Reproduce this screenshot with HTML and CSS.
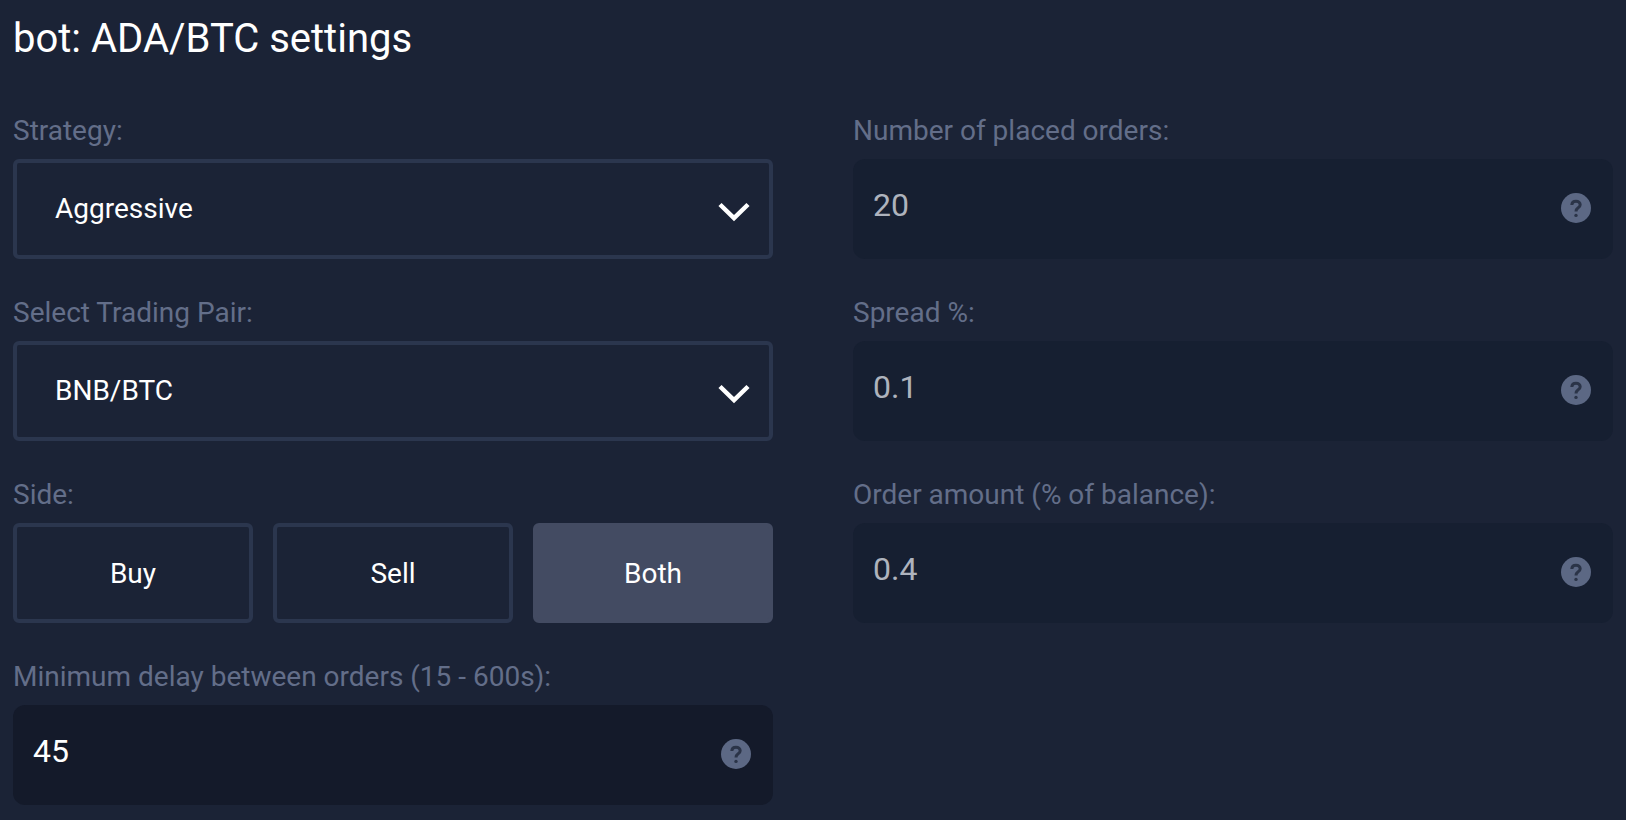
FILE: index.html
```html
<!DOCTYPE html>
<html lang="en">
<head>
<meta charset="utf-8">
<title>bot: ADA/BTC settings</title>
<link rel="stylesheet" href="styles.css">
</head>
<body>
<h1 class="title">bot: ADA/BTC settings</h1>
<main class="form">
  <div class="field">
    <div class="label">Strategy:</div>
    <div class="select"><span>Aggressive</span>
      <svg class="chevron" viewBox="0 0 30 19"><path d="M1 2.5 L15 16 L29 2.5" /></svg>
    </div>
  </div>
  <div class="field">
    <div class="label">Number of placed orders:</div>
    <div class="input muted"><span class="value">20</span>
      <svg class="help" viewBox="0 0 30 30"><circle cx="15" cy="15" r="15"/><path class="q" d="M10.8 12 C10.9 9.4 12.6 8.2 15 8.2 C17.4 8.2 19.2 9.6 19.2 11.7 C19.2 13.4 18.2 14.2 16.9 15.1 C15.6 16 15 16.9 15 18.6"/><circle class="dot" cx="15" cy="22.4" r="1.7"/></svg>
    </div>
  </div>
  <div class="field">
    <div class="label">Select Trading Pair:</div>
    <div class="select"><span>BNB/BTC</span>
      <svg class="chevron" viewBox="0 0 30 19"><path d="M1 2.5 L15 16 L29 2.5" /></svg>
    </div>
  </div>
  <div class="field">
    <div class="label">Spread %:</div>
    <div class="input muted"><span class="value">0.1</span>
      <svg class="help" viewBox="0 0 30 30"><circle cx="15" cy="15" r="15"/><path class="q" d="M10.8 12 C10.9 9.4 12.6 8.2 15 8.2 C17.4 8.2 19.2 9.6 19.2 11.7 C19.2 13.4 18.2 14.2 16.9 15.1 C15.6 16 15 16.9 15 18.6"/><circle class="dot" cx="15" cy="22.4" r="1.7"/></svg>
    </div>
  </div>
  <div class="field">
    <div class="label">Side:</div>
    <div class="sides">
      <div class="side">Buy</div>
      <div class="side">Sell</div>
      <div class="side active">Both</div>
    </div>
  </div>
  <div class="field">
    <div class="label">Order amount (% of balance):</div>
    <div class="input muted"><span class="value">0.4</span>
      <svg class="help" viewBox="0 0 30 30"><circle cx="15" cy="15" r="15"/><path class="q" d="M10.8 12 C10.9 9.4 12.6 8.2 15 8.2 C17.4 8.2 19.2 9.6 19.2 11.7 C19.2 13.4 18.2 14.2 16.9 15.1 C15.6 16 15 16.9 15 18.6"/><circle class="dot" cx="15" cy="22.4" r="1.7"/></svg>
    </div>
  </div>
  <div class="field">
    <div class="label">Minimum delay between orders (15 - 600s):</div>
    <div class="input"><span class="value">45</span>
      <svg class="help" viewBox="0 0 30 30"><circle cx="15" cy="15" r="15"/><path class="q" d="M10.8 12 C10.9 9.4 12.6 8.2 15 8.2 C17.4 8.2 19.2 9.6 19.2 11.7 C19.2 13.4 18.2 14.2 16.9 15.1 C15.6 16 15 16.9 15 18.6"/><circle class="dot" cx="15" cy="22.4" r="1.7"/></svg>
    </div>
  </div>
</main>
</body>
</html>
```

FILE: styles.css
```css
* { box-sizing: border-box; }
html, body { height: 100%; }
body {
  margin: 0;
  padding: 0 13px;
  background: #1b2336;
  color: #fff;
  font-family: Roboto, "Liberation Sans", sans-serif;
  overflow: hidden;
}
.title {
  margin: 0;
  padding-top: 15px;
  height: 115px;
  font-size: 40px;
  line-height: 48px;
  font-weight: 400;
}
.form {
  display: grid;
  grid-template-columns: 760px 760px;
  column-gap: 80px;
  row-gap: 38px;
}
.label {
  height: 32px;
  margin-bottom: 12px;
  font-size: 28px;
  line-height: 32px;
  color: #636e89;
}
.select {
  position: relative;
  display: flex;
  align-items: center;
  height: 100px;
  padding: 0 38px 2px;
  border: 4px solid #2b364e;
  border-radius: 6px;
  font-size: 28px;
}
.chevron {
  position: absolute;
  right: 20px;
  top: 39px;
  width: 30px;
  height: 19px;
  overflow: visible;
  filter: blur(0.6px);
}
.chevron path {
  fill: none;
  stroke: #fff;
  stroke-width: 4.5;
}
.input {
  position: relative;
  height: 100px;
  padding: 26px 20px 0;
  border-radius: 12px;
  background: #141a2a;
  font-size: 32px;
  line-height: 40px;
}
.input.muted {
  background: #161f31;
  color: #aeb3bd;
}
.help {
  position: absolute;
  right: 22px;
  top: 34px;
  width: 30px;
  height: 30px;
  fill: #5c6884;
  filter: blur(0.5px);
}
.help .q {
  fill: none;
  stroke: #2b3448;
  stroke-width: 3;
}
.help .dot { fill: #2b3448; }
.sides {
  display: grid;
  grid-template-columns: repeat(3, 240px);
  column-gap: 20px;
}
.side {
  display: flex;
  align-items: center;
  justify-content: center;
  height: 100px;
  border: 4px solid #2b364e;
  border-radius: 6px;
  font-size: 28px;
}
.side.active {
  background: #434b62;
  border-color: #434b62;
}
```
